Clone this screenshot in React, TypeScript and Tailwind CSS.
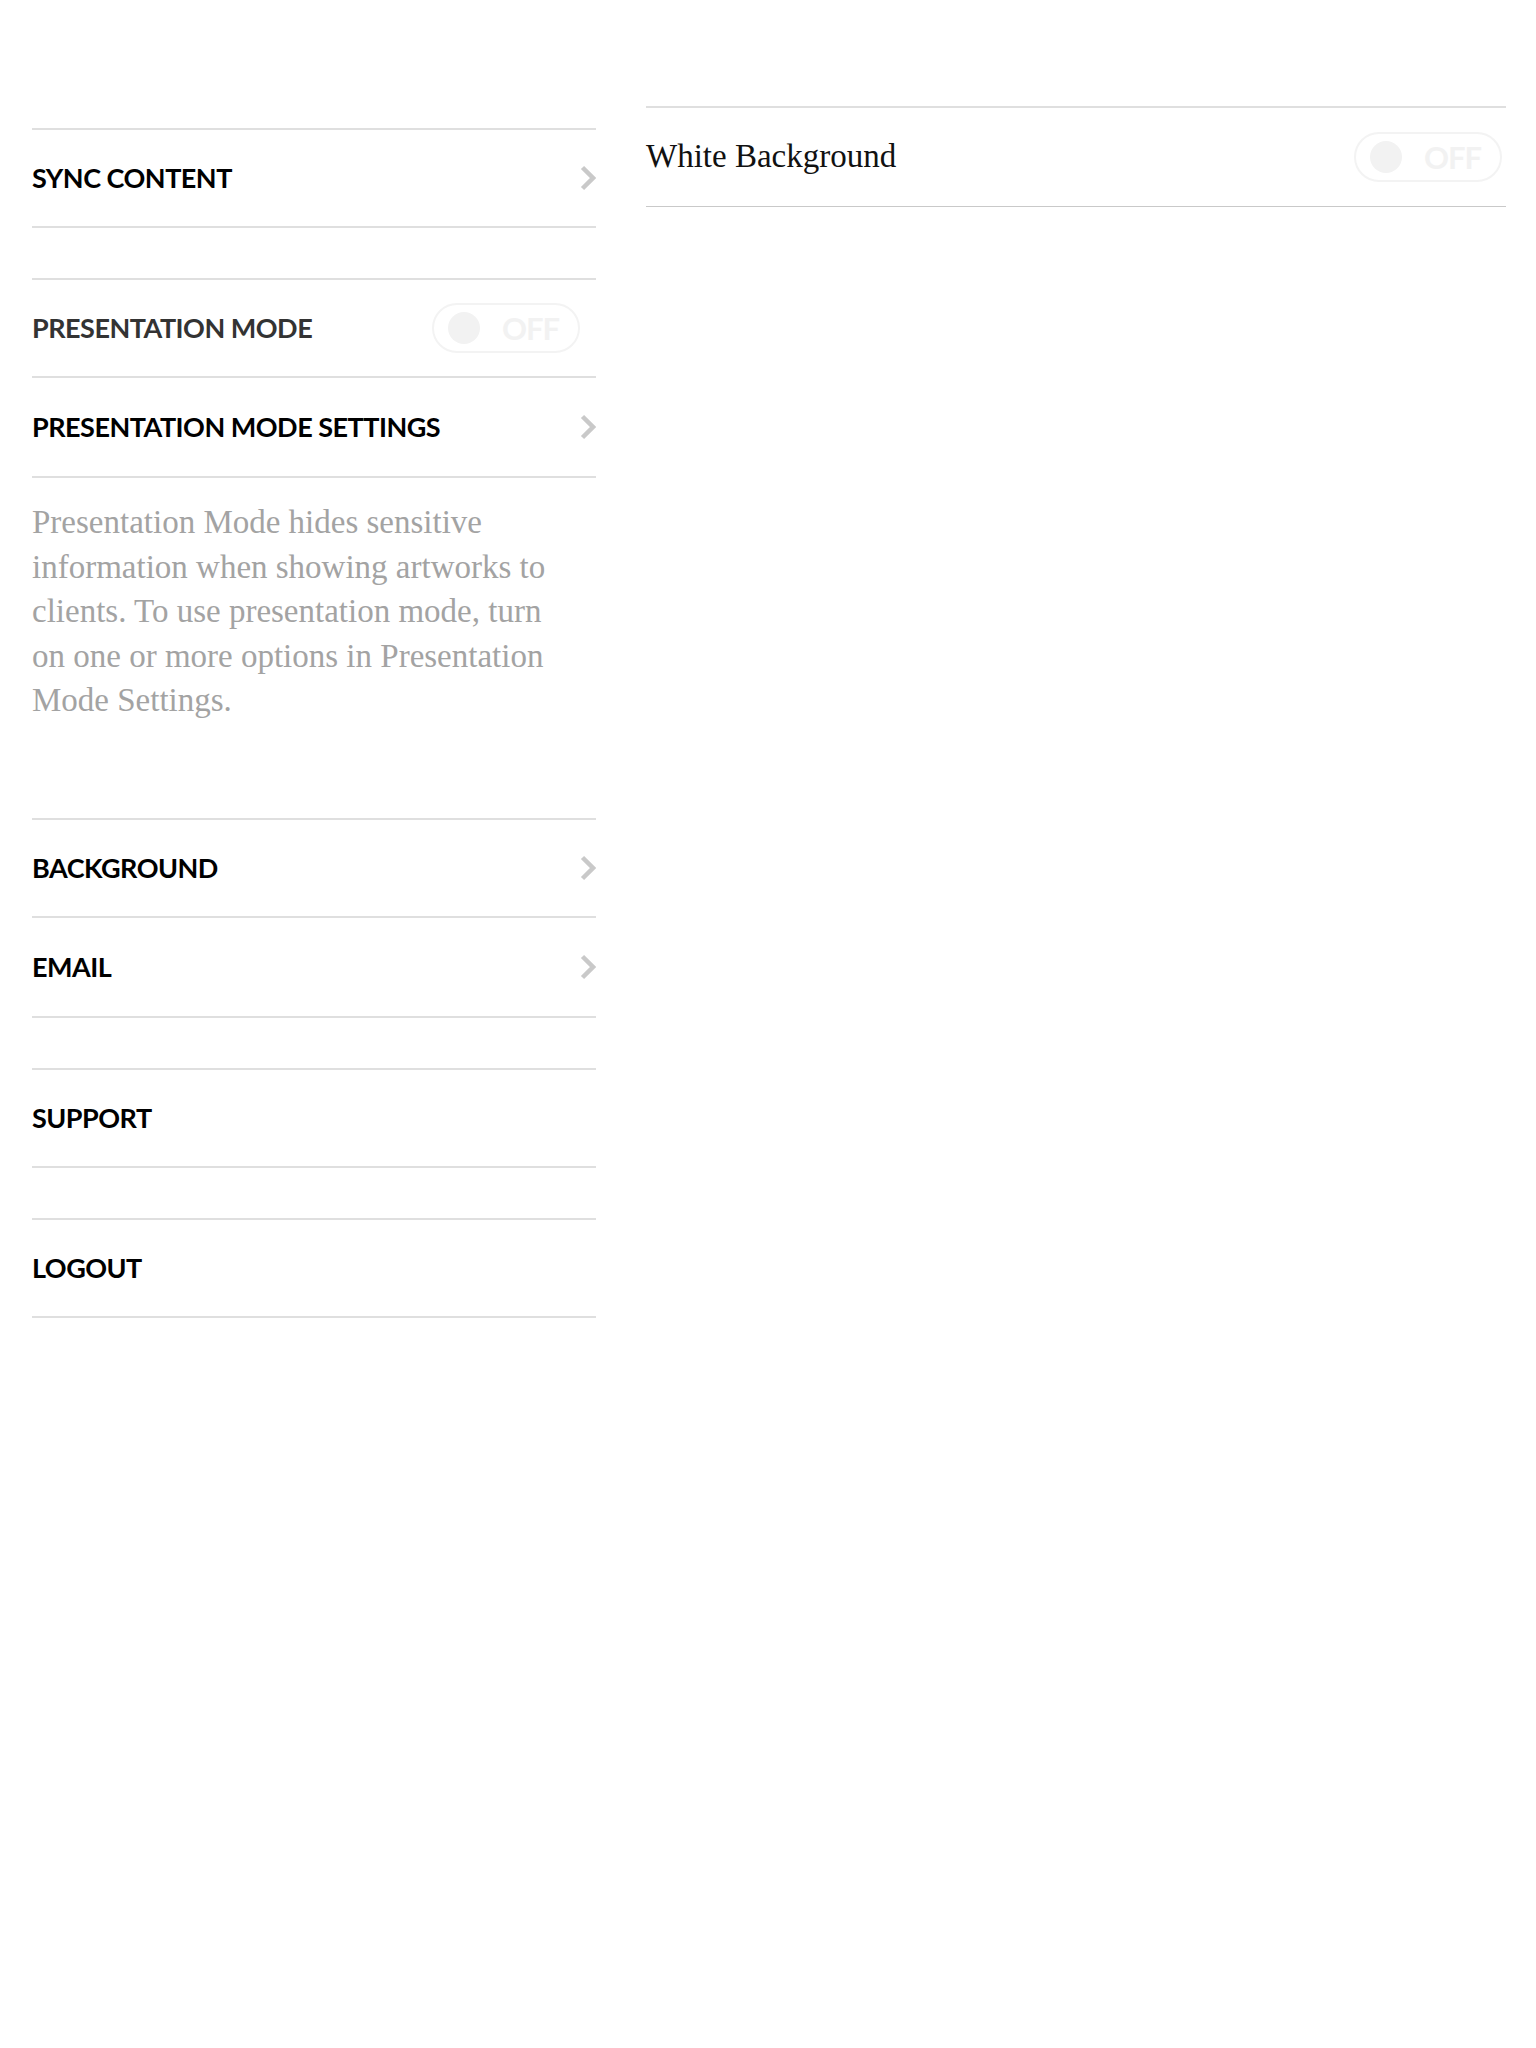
import React from 'react'

const sans = "font-['Lato','Liberation_Sans',sans-serif]"
const serif = "font-['Liberation_Serif','DejaVu_Serif',serif]"

function Chevron() {
  return (
    <svg width="16" height="26" viewBox="0 0 16 26" fill="none" className="shrink-0">
      <polyline points="2.5,2.5 13,13 2.5,23.5" stroke="#c9c9c9" strokeWidth="4.5" />
    </svg>
  )
}

function Toggle() {
  return (
    <div className="flex h-[50px] w-[148px] shrink-0 items-center rounded-full border-2 border-[#f3f3f3] pl-[14px]">
      <div className="h-8 w-8 rounded-full bg-[#f2f2f2]" />
      <span className={`${sans} ml-[22px] text-[31px] leading-none font-bold tracking-[-1px] text-[#f2f2f2]`}>OFF</span>
    </div>
  )
}

function Line() {
  return <div className="h-[2px] w-full bg-[#dfdfdf]" />
}

function Row({
  label,
  chevron,
  toggle,
  muted,
  tall,
}: {
  label: string
  chevron?: boolean
  toggle?: boolean
  muted?: boolean
  tall?: boolean
}) {
  return (
    <>
      <div className={`flex ${tall ? 'h-[98px]' : 'h-[96px]'} items-center justify-between`}>
        <span className={`${sans} text-[27px] font-bold tracking-[-0.5px] ${muted ? 'text-[#333333]' : 'text-black'}`}>
          {label}
        </span>
        {chevron && <Chevron />}
        {toggle && (
          <div className="mr-[16px]">
            <Toggle />
          </div>
        )}
      </div>
      <Line />
    </>
  )
}

export default function App() {
  return (
    <div className="min-h-[2048px] w-full bg-white">
      <div className="flex gap-[50px] pl-[32px]">
        {/* MASTER */}
        <div className="flex w-[564px] flex-col pt-[128px]">
          <Line />
          <Row label="SYNC CONTENT" chevron />

          <div className="mt-[50px]">
            <Line />
            <Row label="PRESENTATION MODE" toggle muted />
            <Row label="PRESENTATION MODE SETTINGS" chevron tall />
          </div>

          <div className="h-[340px] pt-[22px] pr-[24px]">
            <p className={`${serif} text-[33px] leading-[44.5px] text-[#a3a3a3]`}>
              Presentation Mode hides sensitive information when showing artworks to clients. To use presentation mode,
              turn on one or more options in Presentation Mode Settings.
            </p>
          </div>

          <div>
            <Line />
            <Row label="BACKGROUND" chevron />
            <Row label="EMAIL" chevron tall />
          </div>

          <div className="mt-[50px]">
            <Line />
            <Row label="SUPPORT" />
          </div>

          <div className="mt-[50px]">
            <Line />
            <Row label="LOGOUT" />
          </div>
        </div>

        {/* DETAIL */}
        <div className="flex w-[860px] flex-col pt-[106px]">
          <Line />
          <div className="flex h-[98px] items-center justify-between pr-[4px]">
            <span className={`${serif} text-[33px] text-[#111111]`}>White Background</span>
            <Toggle />
          </div>
          <div className="h-px w-full bg-[#c9c9c9]" />
        </div>
      </div>
    </div>
  )
}
